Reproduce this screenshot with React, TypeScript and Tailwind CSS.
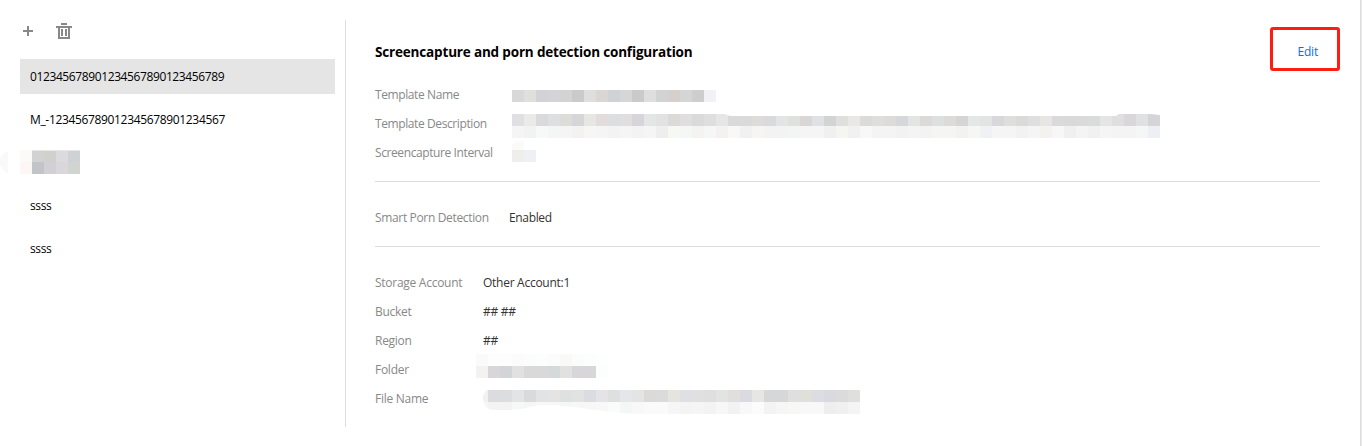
import type { ReactNode } from "react";
import clsx from "clsx";

const CELL = 12;

type MosaicProps = {
  rows: string[];
  width: number;
  height: number;
  offsetX?: number;
  clip?: string;
  id: string;
  className?: string;
};

// each row is a space separated list of hex colours, one for each 12px cell
function Mosaic({ rows, width, height, offsetX = 0, clip, id, className }: MosaicProps) {
  return (
    <svg
      width={width}
      height={height}
      viewBox={`0 0 ${width} ${height}`}
      shapeRendering="crispEdges"
      className={clsx("block shrink-0", className)}
      aria-hidden="true"
    >
      {clip && (
        <clipPath id={id}>
          <path d={clip} />
        </clipPath>
      )}
      <g clipPath={clip ? `url(#${id})` : undefined}>
        {rows.map((row, y) =>
          row.split(" ").map((color, x) => (
            <rect key={`${x}-${y}`} x={offsetX + x * CELL} y={y * CELL} width={CELL} height={CELL} fill={`#${color}`} />
          ))
        )}
      </g>
    </svg>
  );
}

const nameCells = ["d8d8d8 dfdfdd d3d3d7 d2d4d7 d3d3d3 cacaca dededc dbd6d3 ced3d7 d6d6d6 cbc9ca dcdfde d3d3d3 d5d0cd d5d5d5 cecece f0f2f5"];

const descriptionCells = [
  "e0dfe2 eaebe8 dadadd dddfe1 dcdcda d6d6d9 e6e6e3 e2dddc dcdee0 dfdfdf d7d5d9 e4e6e5 e2e2e2 dbdad8 dfdfdf dadada dedede e6e6e6 dadadc dadada dedcda dadadc e2e5e4 e0e0de d9d7d5 dfe1e4 d3d3d3 dfdfdd e9e8e6 dbdbdb dededd dddbd9 d6d7da e2e5e4 dcdad9 dddfe1 dddada d5d5d5 e3e7e8 e2e3e3 d8d8db dedfdd dadada dfdfdf e7e6e4 dadada d9d9d9 dadada dadcdb e5e5e5 dfdfdf d9d7da dfe2e0 d5d5d8",
  "f5f5f5 f2f2f2 f7f8f8 f3f6f5 f5f5f5 f3f2f0 f6f6f4 f5f5f5 f3f3f4 f5f5f5 f3f3f4 f5f5f5 eeeeef f7f7f4 f5f6f6 f5f3f2 f5f7f6 f3f2f0 f8f8f8 f1f1f2 f6f5f3 f3f3f4 f3f3f4 f2f5f4 f5f5f5 f5f5f5 f0f0f1 f5f5f2 f1f1f2 f8f8f8 f4f4f4 f4f4f4 f2f2f3 f4f4f5 f3f3f4 f5f5f3 f5f5f4 f2f2f2 f6f7f4 eff1f5 f5f5f6 f5f5f6 f2f2f2 f5f5f5 f3f2ef f7f7f7 f0f0f0 f4f4f4 f1f1f2 f5f5f5 f4f4f4 f4f4f4 f5f7f6 eeeff4",
];

const folderCells = [
  "fafafa fdfdfd fdfdfd fbfbfc fbfcfc fdfdfd fafcfb f9faf7 fbfdfc fcfdfd fdfefe",
  "f2f2f0 d8d6d8 d2d4d7 e1e1e2 dad9da d9d9da d4d9da e1e1df d8d6d9 d7d6d8 fcfefd",
];

const fileCells = [
  "f2f1ef dadcdf dcdddf e3e4e6 dadada e2e3e5 e5e4e3 dde1df e2e2e0 dadce1 e5e3e5 dde0df e5e6e9 e4e4e4 dbdad8 dadcdc e5e4df dfe0e4 e0e0e0 dfdfe0 e1e4e3 e1dfdd dadbe1 e6e6e4 d8d7d8 d6d7d8 dfdfdf dfe0da dcdde3 dad9df dbdbdb dfdfdd e6e6e6",
  "f7f6f4 f3f3f4 f3f3f4 f6f7f7 f5f5f6 f8f8f8 f7f7f6 f5f6f6 f7f7f7 f7f7f8 f8f8f8 fafcfb f4f7f6 f8f8f8 fafafa fafafa f6f6f6 f4f4f5 f5f5f5 f3f3f4 f7f7f7 f2f2f2 f8f8f8 fbfbfb f3f3f4 f6f6f6 f7f7f5 f8f8f8 f8f8f8 eeeeef f0f0f0 f4f4f4 f5f5f5",
];

function PlusIcon() {
  return (
    <svg width="10" height="10" viewBox="0 0 10 10" fill="#888" shapeRendering="crispEdges">
      <path d="M4 0h2v4h4v2H6v4H4V6H0V4h4z" />
    </svg>
  );
}

function TrashIcon() {
  return (
    <svg width="16" height="16" viewBox="0 0 16 16" fill="#888" shapeRendering="crispEdges">
      <path d="M5 0h6v2H5zM0 3h16v2h-2v11H2V5H0zM4 5v9h8V5z" fillRule="evenodd" />
      <path d="M5 6h2v7H5zM9 6h2v7H9z" />
    </svg>
  );
}

function ListItem({ children, active }: { children: ReactNode; active?: boolean }) {
  return (
    <li className={clsx("h-[35px] px-2.5 leading-[35px] text-black", active && "bg-[#e5e5e5]")}>{children}</li>
  );
}

function Row({ label, labelClass, children }: { label: ReactNode; labelClass: string; children: ReactNode }) {
  return (
    <div className="flex h-[29px] items-start leading-[29px]">
      <dt className={clsx("shrink-0 text-[#888]", labelClass)}>{label}</dt>
      <dd className="text-[#333]">{children}</dd>
    </div>
  );
}

export default function App() {
  return (
    <div className="flex h-[446px] w-[1362px] overflow-hidden bg-white font-['Open_Sans','Noto_Sans',sans-serif] text-[12px] whitespace-nowrap">
      <aside className="mt-5 h-[407px] w-[346px] shrink-0 border-r border-[#ddd] pl-5">
        <div className="flex items-center gap-[23px] pt-[3px] pl-[3px]">
          <button aria-label="Add">
            <PlusIcon />
          </button>
          <button aria-label="Delete">
            <TrashIcon />
          </button>
        </div>
        <ul className="mt-5 mr-2.5 flex flex-col gap-2 tracking-[-0.39px]">
          <ListItem active>012345678901234567890123456789</ListItem>
          <ListItem>
            <span className="tracking-[-0.34px]">M_-123456789012345678901234567</span>
          </ListItem>
          <li className="-ml-5 flex h-[35px] items-start pt-[5px]">
            <svg width="80" height="24" viewBox="0 0 80 24" shapeRendering="crispEdges">
              <path d="M8 1Q0 4 0 12Q0 20 8 23z" fill="#f9f9f9" />
              <path d="M20 0h12v12H20z" fill="#fbfaf9" />
              <path d="M20 12h12v12H20z" fill="#fcf7f4" />
              <path d="M32 0h12v12H32z" fill="#d2d2d2" />
              <path d="M44 0h12v12H44z" fill="#d0d0cc" />
              <path d="M56 0h12v12H56z" fill="#dcdadc" />
              <path d="M68 0h12v12H68z" fill="#ced2d4" />
              <path d="M32 12h12v12H32z" fill="#c3c4ca" />
              <path d="M44 12h12v12H44z" fill="#d2d0d4" />
              <path d="M56 12h12v12H56z" fill="#dad6da" />
              <path d="M68 12h12v12H68z" fill="#d2d4d2" />
              <path d="M32 0h48v1H32z" fill="#e7e7e7" />
            </svg>
          </li>
          <ListItem>ssss</ListItem>
          <ListItem>ssss</ListItem>
        </ul>
      </aside>

      <main className="flex-1 pt-[37px] pr-10 pl-[29px]">
        <header className="flex h-[30px] items-center justify-between">
          <h1 className="text-[13.5px] font-bold tracking-[-0.17px] text-black">
            Screencapture and porn detection configuration
          </h1>
          <div className="relative pr-0.5">
            <a href="#" className="tracking-[-0.2px] text-[#006eff]">
              Edit
            </a>
            <span className="pointer-events-none absolute -top-[16px] -right-5 h-[44px] w-[70px] rounded-[3px] border-3 border-[#ff1d12]" />
          </div>
        </header>

        <dl className="mt-[13px] tracking-[-0.4px]">
          <Row label="Template Name" labelClass="w-[137px]">
            <Mosaic id="name" rows={nameCells} width={204} height={12} className="mt-2.5" />
          </Row>
          <Row label="Template Description" labelClass="w-[137px]">
            <Mosaic
              id="description"
              rows={descriptionCells}
              width={648}
              height={24}
              clip="M0 0H212L218 2H604L607 0H638L648 1V24H0z"
              className="mt-[5px]"
            />
          </Row>
          <Row label="Screencapture Interval" labelClass="w-[137px]">
            <svg width="24" height="21" viewBox="0 0 24 21" className="mt-[3px] block">
              <path d="M0 9V4Q3 0 12 0V9z" fill="#fafaf9" />
              <path d="M0 9h12v12H1L0 20z" fill="#efeeec" />
              <path d="M12 9h12v12H12z" fill="#eff0f3" />
            </svg>
          </Row>
        </dl>

        <dl className="mt-[14px] border-t border-[#ddd] pt-[21px] tracking-[-0.34px]">
          <Row label="Smart Porn Detection" labelClass="w-[134px]">
            Enabled
          </Row>
        </dl>

        <dl className="mt-[14px] border-t border-[#ddd] pt-[21px] tracking-[-0.27px]">
          <Row label="Storage Account" labelClass="w-[108px]">
            Other Account:1
          </Row>
          <Row label="Bucket" labelClass="w-[108px]">
            ## ##
          </Row>
          <Row label="Region" labelClass="w-[108px]">
            ##
          </Row>
          <Row label="Folder" labelClass="w-[108px]">
            <Mosaic id="folder" rows={folderCells} width={132} height={24} className="-mt-px -ml-[7px]" />
          </Row>
          <Row label="File Name" labelClass="w-[108px]">
            <Mosaic
              id="file"
              rows={fileCells}
              width={377}
              height={24}
              offsetX={-7}
              clip="M4 0H377V24H152C110 22 95 15 62 15C48 15 42 20 26 20H12Q2 20 1 13Q-2 5 4 0z"
              className="mt-1.5"
            />
          </Row>
        </dl>
      </main>

      <div className="h-full w-0.5 shrink-0 border-l border-[#ddd] bg-[#e9e9e9]" />
    </div>
  );
}
